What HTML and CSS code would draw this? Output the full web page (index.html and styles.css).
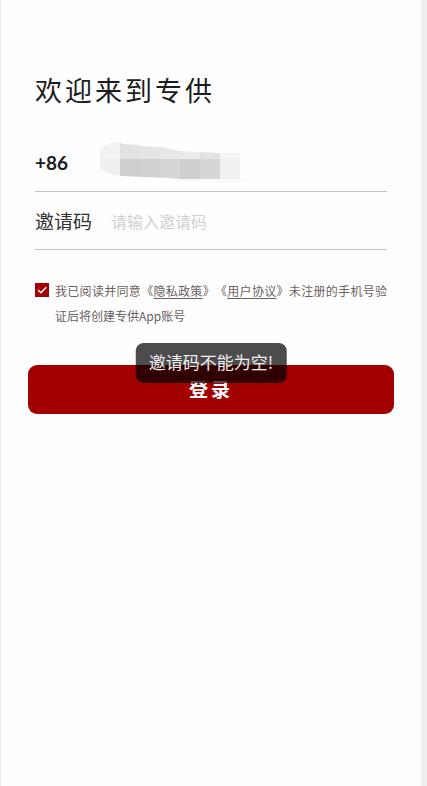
FILE: index.html
```html
<!DOCTYPE html>
<html lang="zh-CN">
<head>
<meta charset="utf-8">
<meta name="viewport" content="width=device-width, initial-scale=1">
<title>登录</title>
<link rel="stylesheet" href="styles.css">
</head>
<body>
<main class="screen">
  <h1 class="title">欢迎来到专供</h1>
  <form class="form" novalidate>
    <div class="field">
      <span class="prefix">+86</span>
      <svg class="masked" width="156" height="40" viewBox="0 0 156 40" shape-rendering="crispEdges" role="img" aria-label="手机号">
        <clipPath id="stroke"><path d="M0 8Q5 1 14 0L20 0L22 2L40 3V4L62 5L76 8L80 9L98 10L118 11H140V37H80L70 36L45 35L20 34Q5 32 0 26Z"/></clipPath>
        <path d="M68 37H152L146 40H85Q74 39 68 37Z" fill="#fafafa"/>
        <g clip-path="url(#stroke)">
          <path d="M0 0H20V17H0Z" fill="#f3f3f3"/><path d="M0 17H20V37H0Z" fill="#efefef"/>
          <path d="M20 0H40V17H20Z" fill="#e2e2e2"/><path d="M20 17H40V37H20Z" fill="#cecece"/>
          <path d="M40 0H60V17H40Z" fill="#e5e5e5"/><path d="M40 17H60V37H40Z" fill="#d0d0d0"/>
          <path d="M60 0H80V17H60Z" fill="#e8e8e8"/><path d="M60 17H80V37H60Z" fill="#d5d5d5"/>
          <path d="M80 0H100V17H80Z" fill="#ebebeb"/><path d="M80 17H100V37H80Z" fill="#cfcfcf"/>
          <path d="M100 0H120V17H100Z" fill="#e2e2e2"/><path d="M100 17H120V37H100Z" fill="#d6d6d6"/>
          <path d="M120 0H140V17H120Z" fill="#f4f4f4"/><path d="M120 17H140V37H120Z" fill="#f1f1f1"/>
        </g>
      </svg>
    </div>
    <div class="field">
      <label class="label" for="code">邀请码</label>
      <input class="input" id="code" type="text" placeholder="请输入邀请码">
    </div>
    <div class="agreement">
      <input class="check" id="agree" type="checkbox" checked>
      <svg class="tick" width="14" height="14" viewBox="0 0 14 14" aria-hidden="true"><path d="M3 7L6 9.8L11.3 4.2" fill="none" stroke="#fff" stroke-width="1.4"/></svg>
      <label class="terms" for="agree">我已阅读并同意《<a href="#privacy">隐私政策</a>》《<a href="#terms">用户协议</a>》未注册的手机号验证后将创建专供App账号</label>
    </div>
    <div class="action">
      <button class="submit" type="button">登录</button>
      <div class="toast" role="alert">邀请码不能为空!</div>
    </div>
  </form>
</main>
</body>
</html>
```
FILE: styles.css
```css
* {
  box-sizing: border-box;
}

body {
  margin: 0;
  background: #efefef;
  font-family: "Noto Sans CJK SC", sans-serif;
  color: #1c1c1c;
}

.screen {
  min-height: 100vh;
  margin: 0 6px 0 1px;
  padding: 70px 34px 40px;
  background: #fefefe;
}

.title {
  margin: 0 0 23px;
  font-size: 27px;
  font-weight: 400;
  line-height: 40px;
  letter-spacing: 3px;
}

.field {
  display: flex;
  align-items: center;
  height: 58px;
  border-bottom: 1px solid #c6c0c0;
}

.field:first-child {
  height: 59px;
}

.prefix {
  width: 65px;
  font-family: Lato, sans-serif;
  font-size: 19px;
  font-weight: 700;
}

.masked {
  display: block;
}

.label {
  width: 76px;
  font-size: 19px;
  color: #333;
}

.input {
  flex: 1;
  min-width: 0;
  padding: 0;
  border: 0;
  outline: 0;
  background: transparent;
  font-family: inherit;
  font-size: 16px;
  color: #333;
}

.input::placeholder {
  color: #d0d0d0;
  opacity: 1;
}

.agreement {
  display: grid;
  grid-template-columns: 14px 1fr;
  column-gap: 6px;
  margin-top: 28px;
}

.check,
.tick {
  grid-area: 1 / 1;
  width: 14px;
  height: 14px;
  margin: 5px 0 0;
}

.check {
  appearance: none;
  background: #a60004;
}

.tick {
  visibility: hidden;
  pointer-events: none;
}

.check:checked + .tick {
  visibility: visible;
}

.terms {
  grid-area: 1 / 2;
  font-size: 12px;
  line-height: 25px;
  color: #6b6060;
  text-align: justify;
  text-spacing-trim: space-all;
}

.terms a {
  color: inherit;
  text-underline-offset: 2px;
}

.action {
  position: relative;
  margin: 37px -7px 0;
}

.submit {
  display: block;
  width: 100%;
  height: 49px;
  padding: 0 0 2px;
  border: 0;
  border-radius: 9px;
  background: #a30000;
  font-family: inherit;
  font-size: 19px;
  font-weight: 700;
  letter-spacing: 3px;
  color: #fff;
}

.toast {
  position: absolute;
  top: -22px;
  left: 50%;
  padding: 0 13px 2px;
  border-radius: 8px;
  background: rgba(0, 0, 0, 0.7);
  font-size: 17px;
  line-height: 38px;
  white-space: nowrap;
  color: #eee;
  transform: translateX(-50%);
}
```
